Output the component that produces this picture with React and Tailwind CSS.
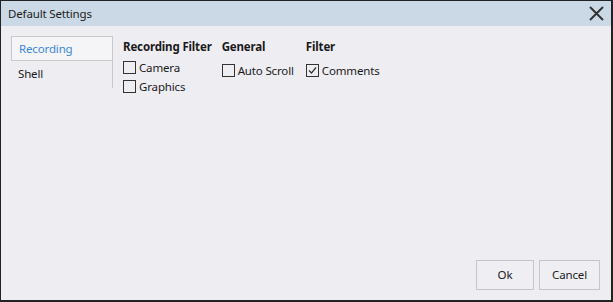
function Check({ checked, label, className = '' }) {
  return (
    <label className={`flex items-center gap-[3px] h-[19px] ${className}`}>
      <span className="w-[13px] h-[13px] border border-[#333] flex items-center justify-center">
        {checked && (
          <svg width="11" height="11" viewBox="0 0 11 11">
            <path d="M2 5.5 L4.5 8 L9 2.5" fill="none" stroke="#333" strokeWidth="1.2" />
          </svg>
        )}
      </span>
      <span>{label}</span>
    </label>
  );
}

export default function App() {
  return (
    <div
      className="w-[613px] h-[302px] flex flex-col border border-[#222] border-b-2 border-r-2 bg-[#eeedf2] text-[11.5px] tracking-[-0.15px] text-[#1a1a1a]"
      style={{ fontFamily: '"Noto Sans", "Open Sans", sans-serif' }}
    >
      <div className="h-[25px] shrink-0 bg-[#cbd9e6] flex items-center justify-between pl-[7px] pr-[7px]">
        <span className="text-[#222]">Default Settings</span>
        <svg width="15" height="15" viewBox="0 0 15 15">
          <path d="M1 1 L14 14 M14 1 L1 14" stroke="#333" strokeWidth="2" />
        </svg>
      </div>

      <div className="flex-1 flex flex-col px-[10px] pt-[10px] pb-[10px]">
        <div className="flex-1 flex gap-[10px]">
          <div className="w-[102px] h-[52px] flex flex-col border-r border-[#c9c9c9]">
            <div className="h-[25px] bg-[#f5f5f7] border border-[#c9c9c9] border-r-0 flex items-center pl-[7px] text-[#3c87d6]">
              Recording
            </div>
            <div className="h-[26px] flex items-center pl-[7px]">Shell</div>
          </div>

          <div className="flex pt-[1px]">
            <div className="flex flex-col">
              <div className="font-bold h-[20px] flex items-center">Recording Filter</div>
              <Check label="Camera" className="mt-[1px]" />
              <Check label="Graphics" />
            </div>
            <div className="flex flex-col ml-[10px]">
              <div className="font-bold h-[20px] flex items-center">General</div>
              <Check label="Auto Scroll" className="mt-[4px]" />
            </div>
            <div className="flex flex-col ml-[12px]">
              <div className="font-bold h-[20px] flex items-center">Filter</div>
              <Check label="Comments" checked className="mt-[4px]" />
            </div>
          </div>
        </div>

        <div className="flex justify-end gap-[5px] pr-[1px]">
          <button className="w-[58px] h-[30px] border border-[#c6c6c6] bg-[#efeef3]">Ok</button>
          <button className="w-[61px] h-[30px] border border-[#c6c6c6] bg-[#efeef3]">Cancel</button>
        </div>
      </div>
    </div>
  );
}
